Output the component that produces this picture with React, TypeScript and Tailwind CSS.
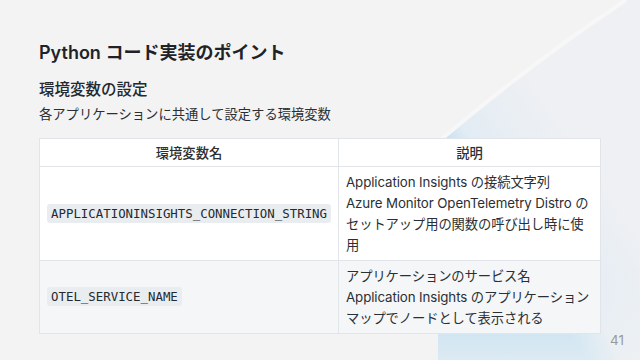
const rows = [
  {
    name: 'APPLICATIONINSIGHTS_CONNECTION_STRING',
    lines: [
      'Application Insights の接続文字列',
      'Azure Monitor OpenTelemetry Distro の',
      'セットアップ用の関数の呼び出し時に使',
      '用',
    ],
  },
  {
    name: 'OTEL_SERVICE_NAME',
    lines: [
      'アプリケーションのサービス名',
      'Application Insights のアプリケーション',
      'マップでノードとして表示される',
    ],
  },
];

function Backdrop() {
  return (
    <svg className="absolute inset-0" width="640" height="360" viewBox="0 0 640 360">
      <defs>
        <linearGradient id="sweep" x1="436" y1="142" x2="640" y2="0" gradientUnits="userSpaceOnUse">
          <stop offset="0" stopColor="#b9dcf2" />
          <stop offset="0.12" stopColor="#e2ecf4" />
          <stop offset="0.45" stopColor="#eef0f3" />
          <stop offset="1" stopColor="#eef0f4" />
        </linearGradient>
        <linearGradient id="fade" x1="0" y1="0" x2="0" y2="1">
          <stop offset="0" stopColor="#f3f3f3" stopOpacity="0" />
          <stop offset="0.75" stopColor="#f3f3f3" stopOpacity="0" />
          <stop offset="1" stopColor="#f3f3f3" stopOpacity="0.6" />
        </linearGradient>
      </defs>
      <rect width="640" height="360" fill="#f3f3f3" />
      <path d="M438 142 Q 535 60 626 0 L 640 0 L 640 360 L 438 360 Z" fill="url(#sweep)" />
      <rect x="438" y="0" width="202" height="360" fill="url(#fade)" />
      <path d="M438 142 Q 535 60 626 0" stroke="#f7f7f7" strokeWidth="4" fill="none" />
    </svg>
  );
}

export default function App() {
  return (
    <div
      className="relative h-[360px] w-[640px] overflow-hidden bg-[#f3f3f3] text-[#2b2f33]"
      style={{ fontFamily: 'Inter, "Noto Sans CJK JP", sans-serif' }}
    >
      <Backdrop />

      <div className="relative flex flex-col px-[39px] pt-[39px]">
        <h1 className="text-[18px] font-semibold leading-[27px] text-[#1f2328]">Python コード実装のポイント</h1>
        <h2 className="mt-[12px] text-[15.5px] font-medium leading-[24px] text-[#24292f]">環境変数の設定</h2>
        <p className="mt-[2px] text-[13.3px] leading-[20px]">各アプリケーションに共通して設定する環境変数</p>

        <table className="mt-[14px] w-[562px] border-collapse text-[13.3px]">
          <thead>
            <tr className="bg-white">
              <th className="h-[28px] w-[298px] border border-[#e1e4e8] p-0 text-center font-medium leading-[20px]">
                環境変数名
              </th>
              <th className="border border-[#e1e4e8] p-0 text-center font-medium leading-[20px]">説明</th>
            </tr>
          </thead>
          <tbody>
            {rows.map((r, i) => (
              <tr key={r.name} className={i % 2 ? 'bg-[#f5f6f8]' : 'bg-white'}>
                <td className="border border-[#e1e4e8] px-[7px] align-middle">
                  <code
                    className="rounded-[3px] bg-[#eaedf0] px-[4px] py-[2px] text-[12.4px] leading-[15px] text-[#24292f]"
                    style={{ fontFamily: '"DejaVu Sans Mono", monospace' }}
                  >
                    {r.name}
                  </code>
                </td>
                <td className="border border-[#e1e4e8] px-[7px] py-[4.5px] leading-[21px] whitespace-nowrap">
                  {r.lines.map((l) => (
                    <div key={l} className="tracking-[-0.1px]">{l}</div>
                  ))}
                </td>
              </tr>
            ))}
          </tbody>
        </table>
      </div>

      <div className="absolute bottom-[13px] right-[16px] text-[13.5px] leading-none text-[#9a9a9a]">41</div>
    </div>
  );
}
